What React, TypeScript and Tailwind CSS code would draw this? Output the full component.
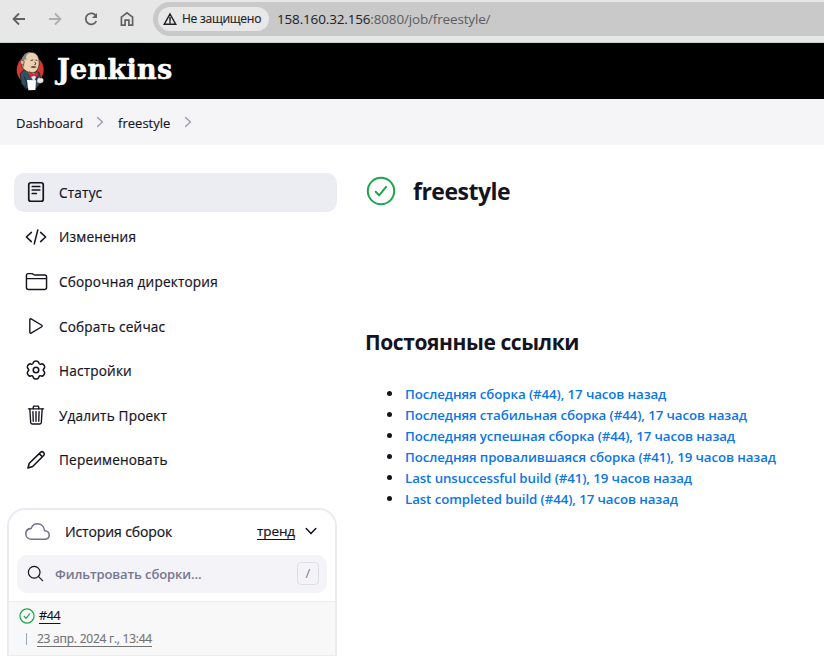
import type { ReactNode } from "react";
import {
  IoCloudOutline,
  IoFolderOutline,
  IoPlayOutline,
  IoSearchOutline,
  IoTrashOutline,
} from "react-icons/io5";

function Stroke({ size, box = 24, width = 1.5, className = "", children }: { size: number; box?: number; width?: number; className?: string; children: ReactNode }) {
  return (
    <svg width={size} height={size} viewBox={`0 0 ${box} ${box}`} fill="none" stroke="currentColor" strokeWidth={width} strokeLinecap="round" strokeLinejoin="round" className={`shrink-0 ${className}`}>
      {children}
    </svg>
  );
}

function BrowserBar() {
  return (
    <div className="flex h-[43px] items-start border-b border-[#c9cfca] bg-[#e7e7e7] text-[#606266]">
      <div className="flex h-[38px] w-[153px] shrink-0 items-center pl-[10px]">
        <Stroke size={18} box={18} width={1.8}><path strokeLinecap="butt" d="M15 9H4M9 3.5 3.5 9 9 14.5" strokeLinejoin="miter" /></Stroke>
        <Stroke size={18} box={18} width={1.8} className="ml-[18px] text-[#adaeb0]"><path strokeLinecap="butt" d="M3 9h11M9 3.5 14.5 9 9 14.5" strokeLinejoin="miter" /></Stroke>
        <Stroke size={18} box={18} width={1.8} className="ml-[18px]">
          <path strokeLinecap="butt" d="M14.1 6.2A5.5 5.5 0 1 0 14.3 11" />
          <path d="M15 3v5h-5z" fill="currentColor" stroke="none" />
        </Stroke>
        <Stroke size={18} box={18} width={1.7} className="ml-[18px]"><path strokeLinejoin="miter" d="M3.4 7.1 9 2.8l5.6 4.3v8.1h-3.7v-5.1H7.1v5.1H3.4z" /></Stroke>
      </div>
      <div className="mt-[2px] flex h-[34px] flex-1 items-center rounded-l-full bg-[#c9c9c9] pl-[5px]">
        <div className="flex h-6 w-[111px] shrink-0 items-center rounded-full bg-[#e8e8e8] pl-[5px] text-[#202124]">
          <Stroke size={14} box={14} width={1.5}><path strokeLinejoin="miter" d="M7 2 12.7 12.2H1.3zM7 5.4v3.3M7 9.8v1" /></Stroke>
          <span className="ml-[5px] whitespace-nowrap text-[12px] tracking-[-0.25px] [-webkit-text-stroke:0.15px]">Не защищено</span>
        </div>
        <span className="ml-[8px] mt-[1px] whitespace-nowrap text-[13.5px] tracking-[-0.16px] text-[#202124]">158.160.32.156<span className="text-[#5b5d60]">:8080/job/freestyle/</span></span>
      </div>
    </div>
  );
}

function Butler() {
  return (
    <svg width="30" height="40" viewBox="0 0 30 40" className="shrink-0">
      <ellipse cx="14.2" cy="18.7" rx="13.5" ry="14.2" fill="#d33833" />
      <path d="M7 19.5 4.2 23l1.2 9.2 4.2 5.2 9.8.8 5.8-7.3-1.8-9.2-7-3z" fill="#335061" stroke="#162630" strokeWidth=".8" />
      <path d="M12.3 21.5 18 31l3.4-8.4z" fill="#dfe5e8" />
      <path d="M7.2 17.5c-2.5-3.3-2.6-8.7.3-12C11-.1 19.3-.1 22 5.6c1.4 3 1.6 8.1.3 11.2-1.6 4-4.1 5.3-7.1 5-3.6-.6-6.3-2.1-8-4.3z" fill="#ecd0b0" stroke="#2b2725" strokeWidth=".7" />
      <path d="M8 16.6C4.8 14.1 4.7 8.9 6.6 6 8.5 2.3 11.7.8 15 1.5c-3.2.7-4.7 2.3-5 4.8l.5 2.4-2.2-.2z" fill="#858585" />
      <path d="M5.8 9.3c-1.7-.5-2.2 4.6 1.6 4.5l1-3.4z" fill="#dfb993" stroke="#3c332e" strokeWidth=".5" />
      <path d="m14.6 9.6 2.7-.7m2.2.1 1.9.5m-2.7 1.2 1.3 2.3-1.7.8" fill="none" stroke="#352e2a" strokeWidth=".9" />
      <path d="M14.2 16c2.2-1.3 4.3-1.2 6.6-.1-1.6 1-4.1 1.7-6.6.1z" fill="#6d4a3b" />
      <path d="m13.4 20.6 4.3 2.4 4.1-2.4.4 5.8-4.3-1.9-4.5 1.9z" fill="#dc2830" stroke="#691c21" strokeWidth=".4" />
      <path d="M8 25.5 10.8 32 9 37.1M21.5 25.5l-3.3 7.3" fill="none" stroke="#152a36" strokeWidth="1" />
      <path d="m11 29 9 .3-.6 9.7-7 .3z" fill="#fff" />
      <path d="M21.2 28.7c1-1.9 1.9-2.3 3.1-1.6 2.2-.7 3.8.9 3 3.1-.3 2.1-4.3 2.8-6.3.9z" fill="#eee9e2" stroke="#555" strokeWidth=".4" />
    </svg>
  );
}

function Gear() {
  return (
    <Stroke size={22} width={1.7}>
      <circle cx="12" cy="12" r="3" />
      <path d="M9.3 3.4C10 1.7 14 1.7 14.7 3.4l.5 1.3c.4.9 1.1 1.2 2 .9l1.2-.3c1.8-.2 3.8 3 2.8 4.6l-1 1.2c-.5.7-.5 1.2 0 1.8l1 1.2c1 1.6-1 4.8-2.8 4.6l-1.2-.3c-.9-.3-1.6 0-2 .9l-.5 1.3c-.7 1.7-4.7 1.7-5.4 0l-.5-1.3c-.4-.9-1.1-1.2-2-.9l-1.2.3c-1.8.2-3.8-3-2.8-4.6l1-1.2c.5-.6.5-1.1 0-1.8l-1-1.2c-1-1.6 1-4.8 2.8-4.6l1.2.3c.9.3 1.6 0 2-.9z" />
    </Stroke>
  );
}

const menu = [
  { label: "Статус", icon: <Stroke size={24} width={1.7} className="mb-[1px]"><rect x="4.75" y="2.75" width="14.5" height="18.5" rx="2" /><path d="M8.3 6.5h7.4M8.3 10h7.4M8.3 13.5h4" /></Stroke> },
  { label: "Изменения", icon: <Stroke size={22} width={1.7}><path d="M7 7 1.5 12 7 17M17 7l5.5 5-5.5 5M13.9 4.5l-3.8 15" /></Stroke> },
  { label: "Сборочная директория", icon: <IoFolderOutline size={23} /> },
  { label: "Собрать сейчас", icon: <IoPlayOutline size={22} /> },
  { label: "Настройки", icon: <Gear /> },
  { label: "Удалить Проект", icon: <IoTrashOutline size={22} /> },
  { label: "Переименовать", icon: <Stroke size={22} width={1.7}><path d="m3.2 20.8 1.5-5.2L17.2 3.4c1.9-1.6 5 1.3 3.4 3.4L8.4 19.1zM15.5 5.1l3.4 3.4" /></Stroke> },
];

const permalinks = [
  "Последняя сборка (#44), 17 часов назад",
  "Последняя стабильная сборка (#44), 17 часов назад",
  "Последняя успешная сборка (#44), 17 часов назад",
  "Последняя провалившаяся сборка (#41), 19 часов назад",
  "Last unsuccessful build (#41), 19 часов назад",
  "Last completed build (#44), 17 часов назад",
];

function Success({ size, width }: { size: number; width: number }) {
  return <Stroke size={size} box={30} width={width} className="text-[#1ea64b]"><circle cx="15" cy="15" r="13.2" /><path d="m9.7 15.7 3.4 3.7 7-8.5" /></Stroke>;
}

function BuildHistory() {
  return (
    <section className="ml-[-7px] mt-[28.8px] h-[150px] w-[330px] overflow-hidden rounded-t-[18px] border-2 border-b-0 border-[#ebebf2] bg-white">
      <div className="flex h-[44px] items-center pb-[1px] pl-[16px] pr-[18px]">
        <IoCloudOutline size={25} className="mt-[1px] shrink-0 text-[#73738c]" />
        <span className="ml-[15px] flex-1 whitespace-nowrap text-[14px] tracking-[-0.12px] [-webkit-text-stroke:0.2px]">История сборок</span>
        <span className="text-[13.5px] tracking-[-0.1px] underline underline-offset-[3px] [-webkit-text-stroke:0.2px]">тренд</span>
        <Stroke size={12} box={12} width={1.5} className="ml-[10px]"><path d="m1.2 3.6 4.8 5 4.8-5" /></Stroke>
      </div>
      <div className="mx-2 mt-[1px] flex h-[38px] items-center rounded-[10px] bg-[#f3f3f8] pl-[9px] pr-[8px]">
        <IoSearchOutline size={19} className="shrink-0" />
        <span className="ml-[10px] mt-[2px] flex-1 whitespace-nowrap text-[13px] font-semibold tracking-[-0.1px] text-[#77778f]">Фильтровать сборки...</span>
        <span className="flex h-[23px] w-[22px] items-center justify-center rounded-[4px] border border-[#dedee9] text-[13px] text-[#77778f]">/</span>
      </div>
      <div className="mt-[8px] h-[55px] border-b border-t border-[#ececef] bg-[#f8f8f8] pl-[10px] text-[12.5px]">
        <div className="flex h-[28px] items-center">
          <Success size={16} width={2.3} />
          <span className="ml-[4px] tracking-[-0.3px] underline underline-offset-[3px] [-webkit-text-stroke:0.15px]">#44</span>
        </div>
        <div className="flex h-[18px] items-center pl-[7px] text-[#737373]">
          <span className="h-[12px] w-px bg-[#9aa8b5]" />
          <span className="ml-[10px] whitespace-nowrap text-[12px] tracking-[-0.24px] underline underline-offset-[3px] [-webkit-text-stroke:0.15px]">23 апр. 2024 г., 13:44</span>
        </div>
      </div>
    </section>
  );
}

export default function App() {
  return (
    <div className="h-[656px] w-[824px] overflow-hidden bg-white font-['Open_Sans','Noto_Sans',sans-serif] text-[#14141f]">
      <BrowserBar />
      <header className="flex h-[56px] items-center bg-black pl-[16px] text-white">
        <Butler />
        <span className="ml-[11px] mt-[-4px] font-['DejaVu_Serif','Liberation_Serif',serif] text-[27px] font-bold leading-none tracking-[0.3px] [-webkit-text-stroke:0.5px]">Jenkins</span>
      </header>
      <nav className="flex h-[46px] items-center bg-[#f5f5f8] pl-[16px] pt-[4px] text-[13px] [-webkit-text-stroke:0.15px]">
        <span>Dashboard</span>
        <Stroke size={12} box={12} width={1.3} className="mb-[4px] ml-[11px] text-[#9999ad]"><path d="m3.5 1.5 5 4.5-5 4.5" /></Stroke>
        <span className="ml-[12px]">freestyle</span>
        <Stroke size={12} box={12} width={1.3} className="mb-[4px] ml-[12px] text-[#9999ad]"><path d="m3.5 1.5 5 4.5-5 4.5" /></Stroke>
      </nav>
      <div className="flex">
        <aside className="w-[365px] shrink-0 pl-[14px] pt-[27.6px]">
          <div className="flex flex-col gap-[5.6px]">
            {menu.map((item, i) => (
              <div key={item.label} className={`flex h-[39px] w-[323px] items-center rounded-[10px] pl-[10px] ${i === 0 ? "bg-[#ecedf2]" : ""}`}>
                <span className="flex w-6 shrink-0 items-center justify-center">{item.icon}</span>
                <span className="ml-[11px] mt-[2px] whitespace-nowrap text-[13.6px] tracking-[0.18px] [-webkit-text-stroke:0.2px]">{item.label}</span>
              </div>
            ))}
          </div>
          <BuildHistory />
        </aside>
        <main className="flex-1">
          <div className="mt-[31px] flex h-[30px] items-center pl-[1px]">
            <Success size={30} width={2} />
            <h1 className="ml-[17px] text-[23px] font-bold tracking-[-0.5px]">freestyle</h1>
          </div>
          <h2 className="mt-[121px] h-[30px] whitespace-nowrap text-[21px] font-bold leading-[30px] tracking-[-0.42px]">Постоянные ссылки</h2>
          <ul className="mt-[26px]">
            {permalinks.map((link) => (
              <li key={link} className="flex h-[21px] items-center pl-[22px]">
                <span className="mb-[1px] size-[5px] shrink-0 rounded-full bg-[#14141f]" />
                <a className="ml-[13px] mt-[2px] whitespace-nowrap text-[13.3px] font-semibold tracking-[-0.1px] text-[#0b76e6]">{link}</a>
              </li>
            ))}
          </ul>
        </main>
      </div>
    </div>
  );
}
